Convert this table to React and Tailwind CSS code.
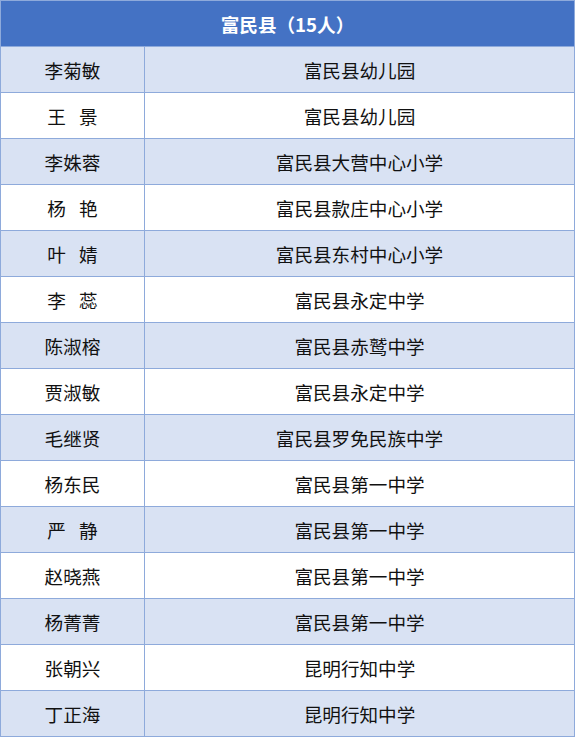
import React from 'react';

const rows = [
  ['李菊敏', '富民县幼儿园'],
  ['王 景', '富民县幼儿园'],
  ['李姝蓉', '富民县大营中心小学'],
  ['杨 艳', '富民县款庄中心小学'],
  ['叶 婧', '富民县东村中心小学'],
  ['李 蕊', '富民县永定中学'],
  ['陈淑榕', '富民县赤鹫中学'],
  ['贾淑敏', '富民县永定中学'],
  ['毛继贤', '富民县罗免民族中学'],
  ['杨东民', '富民县第一中学'],
  ['严 静', '富民县第一中学'],
  ['赵晓燕', '富民县第一中学'],
  ['杨菁菁', '富民县第一中学'],
  ['张朝兴', '昆明行知中学'],
  ['丁正海', '昆明行知中学'],
];

const App = () => {
  return (
    <div className="w-[575px] bg-white font-['Noto_Sans_CJK_SC',sans-serif] text-[18.6px] text-[#111]">
      <div className="border-t border-l border-r border-b border-[#8eaadb]">
        {/* 表头 */}
        <div className="h-[45px] bg-[#4472c4] flex items-center justify-center text-white font-bold">
          富民县（15人）
        </div>
        {rows.map(([name, school], i) => (
          <div
            key={i}
            className={`grid grid-cols-[143px_1fr] h-[46px] border-t border-[#8eaadb] ${
              i % 2 === 0 ? 'bg-[#d9e2f3]' : 'bg-white'
            }`}
          >
            <div className="flex items-center justify-center whitespace-pre [word-spacing:9px]">{name}</div>
            <div className="flex items-center justify-center border-l border-[#8eaadb]">{school}</div>
          </div>
        ))}
      </div>
    </div>
  );
};

export default App;
